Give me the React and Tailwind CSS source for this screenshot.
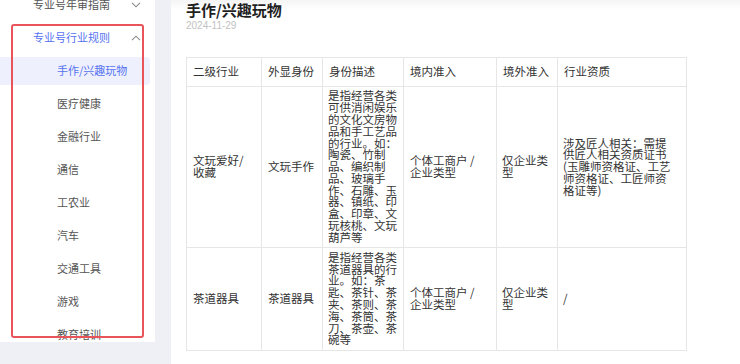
import React from "react";

const items = ["手作/兴趣玩物", "医疗健康", "金融行业", "通信", "工农业", "汽车", "交通工具", "游戏", "教育培训"];

function Chevron({ up }) {
  return (
    <svg width="10" height="6" viewBox="0 0 10 6" className="shrink-0">
      <polyline
        points={up ? "1,5.2 5,1.2 9,5.2" : "1,0.8 5,4.8 9,0.8"}
        fill="none"
        stroke="#8a8a8a"
        strokeWidth="1.1"
      />
    </svg>
  );
}

const rows = [
  {
    a: (
      <>
        文玩爱好/<wbr />收藏
      </>
    ),
    b: "文玩手作",
    c: "是指经营各类可供消闲娱乐的文化文房物品和手工艺品的行业。如：陶瓷、竹制品、编织制品、玻璃手作、石雕、玉器、镇纸、印盒、印章、文玩核桃、文玩葫芦等",
    d: "个体工商户 / 企业类型",
    e: "仅企业类型",
    f: (
      <>
        涉及匠人相关：需提
        <br />
        供匠人相关资质证书
        <br />
        (玉雕师资格证、工艺
        <br />
        师资格证、工匠师资
        <br />
        格证等)
      </>
    ),
  },
  {
    a: "茶道器具",
    b: "茶道器具",
    c: "是指经营各类茶道器具的行业。如：茶匙、茶针、茶夹、茶则、茶海、茶筒、茶刀、茶壶、茶碗等",
    d: "个体工商户 / 企业类型",
    e: "仅企业类型",
    f: "/",
  },
];

export default function App() {
  return (
    <div className="w-[740px] h-[364px] overflow-hidden flex bg-[#eff0f5] font-['Noto_Sans_CJK_SC',sans-serif]">
      {/* Sidebar */}
      <div className="w-[155px] shrink-0 h-[364px] flex flex-col">
        <div className="relative h-[342px] bg-white overflow-hidden">
          <div className="-mt-[12px] flex flex-col">
            <div className="h-[33px] flex items-center pl-[33px] pr-[14px] justify-between text-[11px] text-[#555]">
              <span>专业号年审指南</span>
              <Chevron />
            </div>
            <div className="h-[33px] flex items-center pl-[33px] pr-[14px] justify-between text-[11px] text-[#5672f0]">
              <span>专业号行业规则</span>
              <Chevron up />
            </div>
            {items.map((t, i) => (
              <div key={t} className="h-[33px] flex items-center pr-[5px]">
                <div
                  className={
                    i === 0
                      ? "h-[28px] w-full flex items-center pl-[57px] rounded-r-[4px] bg-[#eef1fd] text-[11px] text-[#5672f0]"
                      : "h-[28px] w-full flex items-center pl-[57px] text-[11px] text-[#555]"
                  }
                >
                  {t}
                </div>
              </div>
            ))}
          </div>
          <div className="absolute left-[11px] top-[24px] w-[133px] h-[314px] border-[2px] border-[#e9545a] rounded-[3px] pointer-events-none" />
        </div>
      </div>
      {/* Gap strip */}
      <div className="w-[16px] shrink-0" />
      {/* Main */}
      <div className="flex-1 h-[364px] bg-white pl-[15px] relative">
        <div className="absolute left-0 right-0 top-0 h-[10px] bg-gradient-to-b from-[#f4f4f4] to-white" />
        <div className="relative pt-[1px] flex flex-col">
          <div className="text-[15px] leading-[18px] font-bold text-[#1f1f1f]">手作/兴趣玩物</div>
          <div className="mt-[1px] text-[10px] leading-[12px] text-[#c2c2c2] font-['Liberation_Sans',sans-serif]">2024-11-29</div>
        </div>
        <table className="mt-[25px] table-fixed border-collapse w-[500px] text-[11.5px] leading-[11.8px] text-[#333]">
          <colgroup>
            <col className="w-[75px]" />
            <col className="w-[61px]" />
            <col className="w-[81px]" />
            <col className="w-[93px]" />
            <col className="w-[61px]" />
            <col className="w-[129px]" />
          </colgroup>
          <thead>
            <tr className="h-[29px]">
              {["二级行业", "外显身份", "身份描述", "境内准入", "境外准入", "行业资质"].map((h) => (
                <th key={h} className="border border-[#e6e6e6] px-[6px] py-[8px] text-left font-normal align-middle">
                  {h}
                </th>
              ))}
            </tr>
          </thead>
          <tbody>
            {rows.map((r, i) => (
              <tr key={i} className={i === 0 ? "h-[161px]" : "h-[103px]"}>
                <td className="border border-[#e6e6e6] pl-[6px] pr-[10px] py-[3px] align-middle">{r.a}</td>
                <td className="border border-[#e6e6e6] px-[6px] py-[3px] align-middle">{r.b}</td>
                <td className="border border-[#e6e6e6] px-[5px] py-[3px] align-middle">{r.c}</td>
                <td className="border border-[#e6e6e6] pl-[6px] pr-[14px] py-[3px] align-middle">{r.d}</td>
                <td className="border border-[#e6e6e6] px-[5px] py-[3px] align-middle">{r.e}</td>
                <td className="border border-[#e6e6e6] pl-[5px] pr-[8px] py-[3px] align-middle">{r.f}</td>
              </tr>
            ))}
          </tbody>
        </table>
      </div>
    </div>
  );
}
